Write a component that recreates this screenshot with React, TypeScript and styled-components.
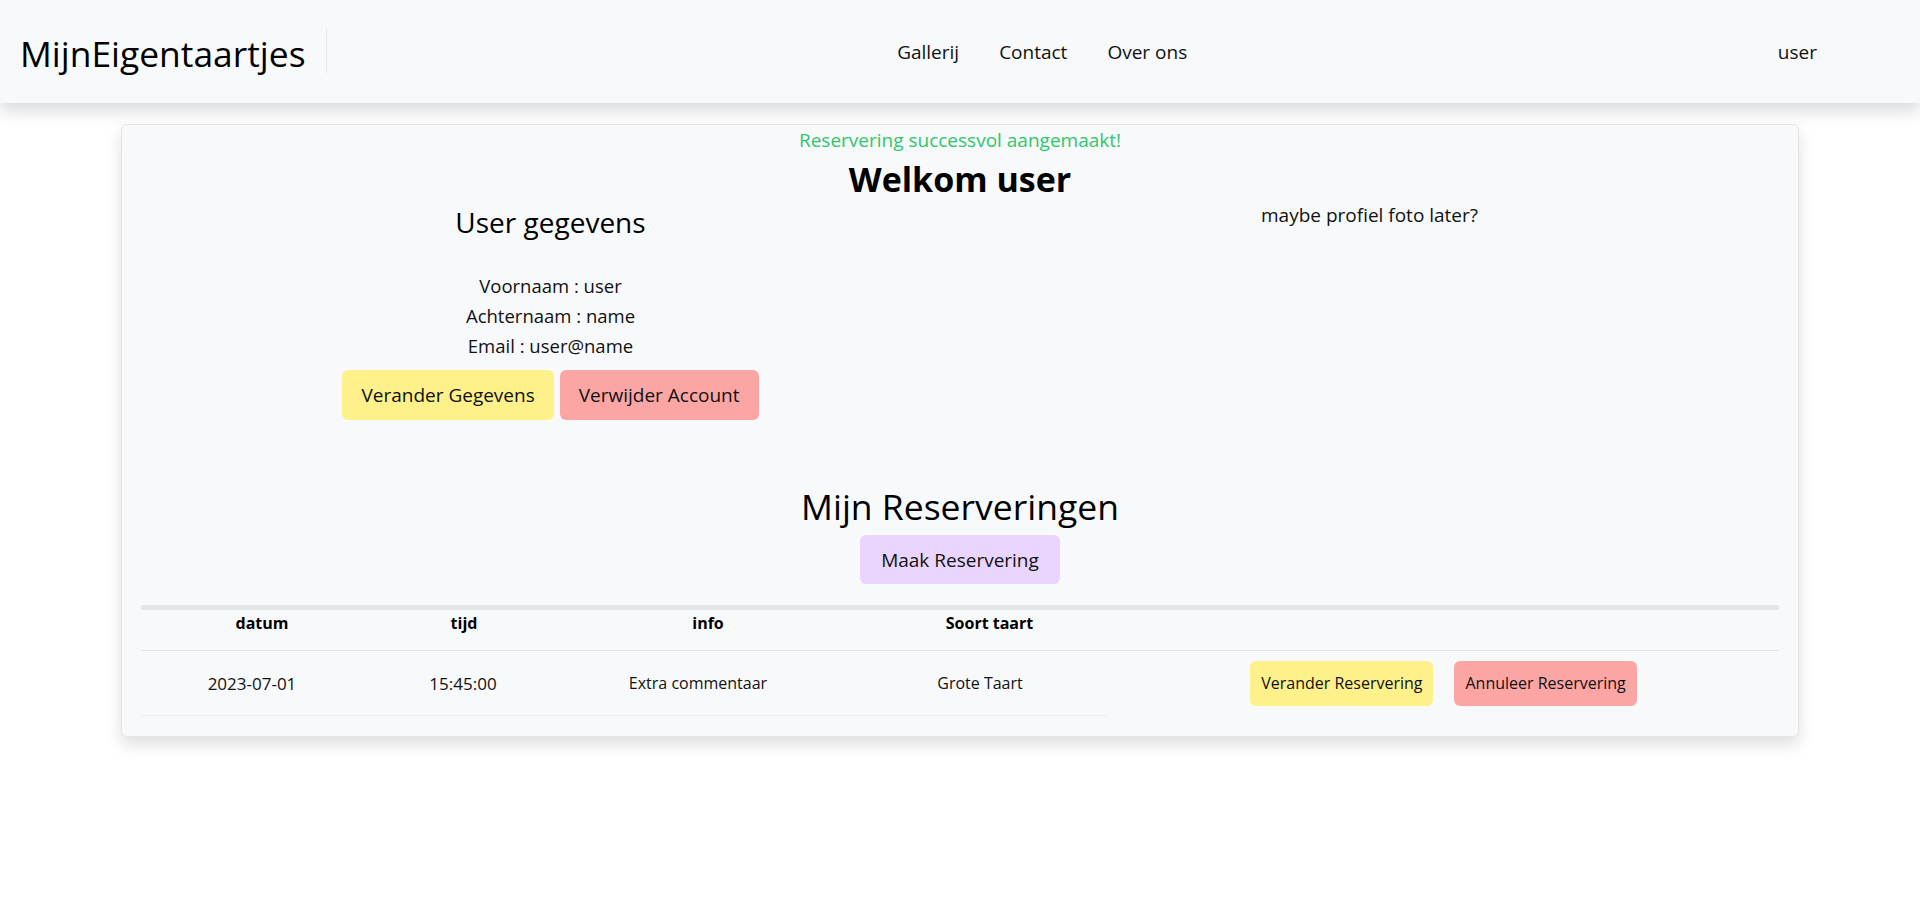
import React from "react";
import styled, { createGlobalStyle } from "styled-components";

const GlobalStyle = createGlobalStyle`
  html, body {
    margin: 0;
    padding: 0;
    background: #ffffff;
    font-family: "Open Sans", "Noto Sans", Arial, sans-serif;
    color: #111111;
  }
  * { box-sizing: border-box; }
`;

const Nav = styled.nav`
  height: 103px;
  background: #f8f9fa;
  box-shadow: 0 8px 16px rgba(0, 0, 0, 0.15);
  display: flex;
  align-items: center;
  padding: 2px 83px 0 20px;
`;

const Brand = styled.div`
  font-size: 35.4px;
  line-height: 54px;
  color: #000;
  margin-right: 20px;
`;

const Divider = styled.div`
  width: 1px;
  height: 44px;
  margin-top: -4px;
  background: #e3e5e8;
`;

const Links = styled.div`
  flex: 1;
  display: flex;
  justify-content: center;
`;

const NavLink = styled.a`
  font-size: 19px;
  line-height: 27px;
  padding: 0 20px;
  color: #111;
  text-decoration: none;
`;

const Main = styled.main`
  padding: 21px 121px 40px;
`;

const Card = styled.section`
  background: #f8f9fa;
  border: 1px solid #e3e5e8;
  border-radius: 6px;
  box-shadow: 0 8px 16px rgba(0, 0, 0, 0.13);
  padding: 0 19px 20px;
`;

const Success = styled.p`
  margin: 0;
  text-align: center;
  color: #2ec76d;
  font-size: 19px;
  line-height: 31px;
`;

const Welcome = styled.h1`
  margin: 0;
  text-align: center;
  font-size: 34px;
  font-weight: 700;
  line-height: 46px;
  color: #000;
`;

const Columns = styled.div`
  display: grid;
  grid-template-columns: 1fr 1fr;
  margin-top: -2px;
`;

const Column = styled.div`
  display: flex;
  flex-direction: column;
  align-items: center;
  text-align: center;
`;

const SubTitle = styled.h3`
  margin: 5px 0 0;
  font-size: 28px;
  font-weight: 400;
  line-height: 34px;
  color: #000;
`;

const InfoList = styled.div`
  margin-top: 32px;
  display: flex;
  flex-direction: column;
`;

const InfoLine = styled.p`
  margin: 0;
  font-size: 18.5px;
  line-height: 30px;
`;

const ButtonRow = styled.div<{ $gap: number }>`
  display: flex;
  justify-content: center;
  gap: ${(p) => p.$gap}px;
`;

const Button = styled.button<{ $tone: "yellow" | "red" | "purple"; $size: "lg" | "sm" }>`
  border: none;
  border-radius: 6px;
  font-family: inherit;
  color: #111;
  cursor: pointer;
  background: ${(p) =>
    p.$tone === "yellow" ? "#fef08a" : p.$tone === "red" ? "#fca5a5" : "#e9d5ff"};
  font-size: ${(p) => (p.$size === "lg" ? "19px" : "16px")};
  height: ${(p) => (p.$size === "lg" ? "50px" : "45px")};
  padding: ${(p) => (p.$size === "lg" ? "0 19px" : "0 11px")};
`;

const ProfileButtons = styled(ButtonRow)`
  margin-top: 9px;
`;

const MakeButton = styled(Button)`
  height: 49px;
  padding: 0 21px;
`;

const RightText = styled.p`
  margin: 0;
  font-size: 19px;
  line-height: 30px;
`;

const SectionTitle = styled.h2`
  margin: 62px 0 0;
  text-align: center;
  font-size: 35.5px;
  font-weight: 400;
  line-height: 48px;
  color: #000;
`;

const Center = styled.div`
  display: flex;
  justify-content: center;
  margin-top: 5px;
`;

const Table = styled.table`
  width: 100%;
  margin-top: 21px;
  border-collapse: collapse;
  border-top: 5px solid #e5e6ea;
  table-layout: fixed;
`;

const Th = styled.th`
  font-size: 16px;
  font-weight: 700;
  line-height: 27px;
  padding: 0 0 13px;
  text-align: center;
  vertical-align: top;
  border-bottom: 1px solid #e3e5e8;
  color: #000;
`;

const Td = styled.td<{ $shift?: number; $line?: boolean; $size?: number }>`
  height: 65px;
  font-size: ${(p) => p.$size ?? 16}px;
  text-align: center;
  vertical-align: middle;
  padding: 0 ${(p) => p.$shift ?? 0}px 0 0;
  border-bottom: ${(p) => (p.$line ? "1px solid #eceef0" : "none")};
`;

const rows = [
  { datum: "2023-07-01", tijd: "15:45:00", info: "Extra commentaar", soort: "Grote Taart" },
];

export default function App() {
  return (
    <>
      <GlobalStyle />
      <Nav>
        <Brand>MijnEigentaartjes</Brand>
        <Divider />
        <Links>
          <NavLink href="#">Gallerij</NavLink>
          <NavLink href="#">Contact</NavLink>
          <NavLink href="#">Over ons</NavLink>
        </Links>
        <NavLink href="#">user</NavLink>
      </Nav>
      <Main>
        <Card>
          <Success>Reservering successvol aangemaakt!</Success>
          <Welcome>Welkom user</Welcome>
          <Columns>
            <Column>
              <SubTitle>User gegevens</SubTitle>
              <InfoList>
                <InfoLine>Voornaam : user</InfoLine>
                <InfoLine>Achternaam : name</InfoLine>
                <InfoLine>Email : user@name</InfoLine>
              </InfoList>
              <ProfileButtons $gap={6}>
                <Button $tone="yellow" $size="lg">Verander Gegevens</Button>
                <Button $tone="red" $size="lg">Verwijder Account</Button>
              </ProfileButtons>
            </Column>
            <Column>
              <RightText>maybe profiel foto later?</RightText>
            </Column>
          </Columns>
          <SectionTitle>Mijn Reserveringen</SectionTitle>
          <Center>
            <MakeButton $tone="purple" $size="lg">Maak Reservering</MakeButton>
          </Center>
          <Table>
            <colgroup>
              <col style={{ width: 242 }} />
              <col style={{ width: 162 }} />
              <col style={{ width: 326 }} />
              <col style={{ width: 237 }} />
              <col />
            </colgroup>
            <thead>
              <tr>
                <Th>datum</Th>
                <Th>tijd</Th>
                <Th>info</Th>
                <Th>Soort taart</Th>
                <Th />
              </tr>
            </thead>
            <tbody>
              {rows.map((r) => (
                <tr key={r.datum + r.tijd}>
                  <Td $shift={20} $line $size={17}>{r.datum}</Td>
                  <Td $shift={2} $line $size={17}>{r.tijd}</Td>
                  <Td $shift={20} $line>{r.info}</Td>
                  <Td $shift={19} $line>{r.soort}</Td>
                  <Td>
                    <ButtonRow $gap={21}>
                      <Button $tone="yellow" $size="sm">Verander Reservering</Button>
                      <Button $tone="red" $size="sm">Annuleer Reservering</Button>
                    </ButtonRow>
                  </Td>
                </tr>
              ))}
            </tbody>
          </Table>
        </Card>
      </Main>
    </>
  );
}
